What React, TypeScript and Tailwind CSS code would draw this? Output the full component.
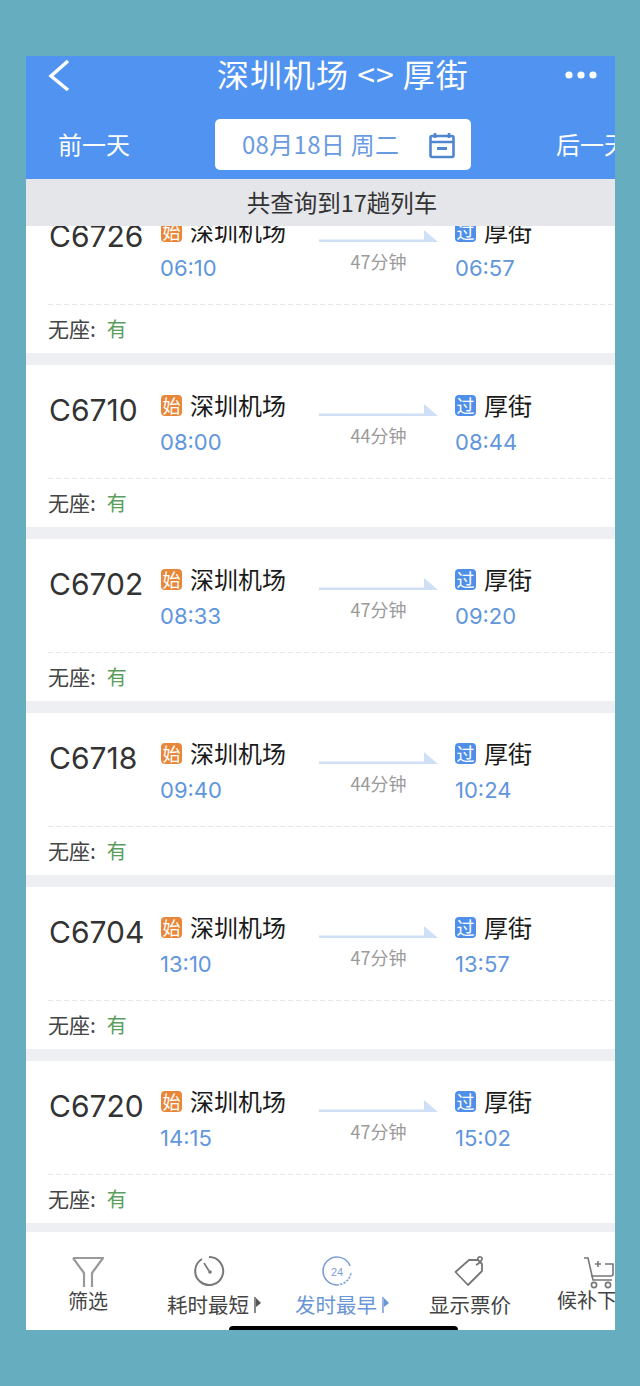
const trains = [
  { no: "C6726", dep: "06:10", arr: "06:57", dur: "47分钟" },
  { no: "C6710", dep: "08:00", arr: "08:44", dur: "44分钟" },
  { no: "C6702", dep: "08:33", arr: "09:20", dur: "47分钟" },
  { no: "C6718", dep: "09:40", arr: "10:24", dur: "44分钟" },
  { no: "C6704", dep: "13:10", arr: "13:57", dur: "47分钟" },
  { no: "C6720", dep: "14:15", arr: "15:02", dur: "47分钟" },
];

function SortMark({ color }: { color: string }) {
  return (
    <svg width="7" height="18" viewBox="0 0 7 18" className="ml-[5px] shrink-0">
      <path d="M1 2v16" stroke={color} strokeWidth="1.4" />
      <path d="M2 3l5 5-5 4z" fill={color} />
    </svg>
  );
}

function TrainCard({ no, dep, arr, dur }: (typeof trains)[number]) {
  return (
    <div className="h-[162px] shrink-0 bg-white">
      <div className="flex h-[113px] pl-[23px]">
        <div className="w-[112px] pt-[27px] text-[30px] leading-[36px] text-[#333333] font-['Inter']">{no}</div>
        <div className="w-[158px] pt-[27px]">
          <div className="flex items-center h-[26px]">
            <span className="flex h-[21px] w-[21px] items-center justify-center rounded-[4px] bg-[#e8873a] text-[18px] leading-none text-white">始</span>
            <span className="ml-[8px] text-[24px] leading-[26px] text-[#1a1a1a]">深圳机场</span>
          </div>
          <div className="-ml-[1px] mt-[10px] text-[22px] leading-[28px] text-[#5f96dc] font-['Inter']">{dep}</div>
        </div>
        <div className="w-[119px] shrink-0 pt-[39px]">
          <svg width="119" height="13" viewBox="0 0 119 13" className="block">
            <path d="M0 9.5h105V0l14 12H0z" fill="#cfe0f6" />
          </svg>
          <div className="mt-[6px] text-center text-[18px] leading-[24px] text-[#9a9a9a]">{dur}</div>
        </div>
        <div className="ml-[18px] pt-[27px]">
          <div className="-ml-[1px] flex items-center h-[26px]">
            <span className="flex h-[21px] w-[21px] items-center justify-center rounded-[4px] bg-[#4f8fea] text-[18px] leading-none text-white">过</span>
            <span className="ml-[8px] text-[24px] leading-[26px] text-[#1a1a1a]">厚街</span>
          </div>
          <div className="-ml-[1px] mt-[10px] text-[22px] leading-[28px] text-[#5f96dc] font-['Inter']">{arr}</div>
        </div>
      </div>
      <div className="ml-[22px] h-[1px] bg-[repeating-linear-gradient(90deg,#e6e6e8_0_5px,transparent_5px_8px)]" />
      <div className="flex h-[48px] items-center pl-[22px] text-[21px] text-[#444444]">
        <span>无座:</span>
        <span className="ml-[11px] text-[20px] text-[#5a9e5e]">有</span>
      </div>
    </div>
  );
}

export default function App() {
  return (
    <div className="h-[1386px] w-[640px] overflow-hidden bg-[#66aebf] pl-[26px] pt-[56px] font-['Noto_Sans_CJK_SC',sans-serif]">
      <div className="relative flex h-[1274px] w-[589px] flex-col overflow-hidden bg-[#eeeff2]">
        {/* header */}
        <div className="h-[123px] shrink-0 bg-[#5093f0] text-white">
          <div className="flex h-[38px] items-center pl-[22px] pr-[17px]">
            <svg width="22" height="32" viewBox="0 0 22 32" fill="none" stroke="white" strokeWidth="3.4">
              <path d="M20 2L3 17l17 14" />
            </svg>
            <span className="-mt-[4px] ml-[147px] text-[32px] leading-[38px] tracking-[1px]">深圳机场 &lt;&gt; 厚街</span>
            <svg width="34" height="10" viewBox="0 0 34 10" fill="white" className="ml-auto">
              <circle cx="5" cy="5" r="3.6" />
              <circle cx="17" cy="5" r="3.6" />
              <circle cx="29" cy="5" r="3.6" />
            </svg>
          </div>
          <div className="mt-[25px] flex h-[51px] items-center">
            <span className="ml-[32px] w-[157px] -mt-[1px] shrink-0 text-[24px]">前一天</span>
            <div className="flex h-[51px] w-[256px] shrink-0 items-center rounded-[5px] bg-white pl-[27px] text-[24px] tracking-[0.3px] text-[#6a9be0]">
              <span className="-mt-[2px]">08月18日 周二</span>
              <svg width="28" height="28" viewBox="0 0 28 28" fill="none" stroke="#4f86cf" strokeWidth="2.6" className="ml-auto mr-[15px]">
                <rect x="2.5" y="5" width="23" height="21" rx="1.5" />
                <path d="M3 11h22M7 2v5M21 2v5" />
                <path d="M9 17.5h10" strokeWidth="3" />
              </svg>
            </div>
            <span className="ml-[85px] -mt-[1px] shrink-0 whitespace-nowrap text-[24px]">后一天</span>
          </div>
        </div>

        <div className="z-10 flex h-[47px] shrink-0 items-center justify-center bg-[#e5e6ea] pl-[43px] text-[23.5px] text-[#333333]">
          共查询到17趟列车
        </div>

        {/* list */}
        <div className="flex h-[1006px] flex-col overflow-hidden">
          <div className="-mt-[35px] flex flex-col gap-[12px]">
            {trains.map((t) => (
              <TrainCard key={t.no} {...t} />
            ))}
          </div>
        </div>

        {/* bottom tabs */}
        <div className="flex h-[98px] shrink-0 bg-white">
          <div className="flex w-[124px] shrink-0 flex-col items-center pt-[24px]">
            <svg width="34" height="32" viewBox="0 0 34 32" fill="none" stroke="#999999" strokeWidth="2.2">
              <path d="M2 2h30l-11 15v14M2 2l11 15v14" strokeLinejoin="round" />
            </svg>
            <span className="-mt-[1px] text-[20px] leading-[28px] text-[#444444]">筛选</span>
          </div>
          <div className="flex w-[128px] shrink-0 flex-col items-center pt-[23px]">
            <svg width="32" height="32" viewBox="0 0 32 32" fill="none" stroke="#777777" strokeWidth="2" className="mr-[11px]">
              <path d="M9 4a14 14 0 1 0 7-2" />
              <path d="M11 8l5 8" strokeWidth="1.6" />
              <circle cx="17" cy="17" r="1.8" fill="#777777" stroke="none" />
            </svg>
            <div className="mt-[3px] flex items-center text-[20.5px] leading-[28px] text-[#444444]">耗时最短<SortMark color="#555555" /></div>
          </div>
          <div className="flex w-[128px] shrink-0 flex-col items-center pt-[23px]">
            <svg width="32" height="32" viewBox="0 0 32 32" fill="none" stroke="#7d9fd6" strokeWidth="1.6" className="mr-[10px]">
              <path d="M30 17A14 14 0 1 1 16 2a14 14 0 0 1 13 9" />
              <path d="M30 17a14 14 0 0 1-14 13" strokeDasharray="1.5 2" stroke="#ffffff" />
              <text x="16" y="20.5" textAnchor="middle" fontSize="11" fill="#7d9fd6" stroke="none" fontFamily="Liberation Sans">24</text>
            </svg>
            <div className="mt-[3px] flex items-center text-[20.5px] leading-[28px] text-[#6a95d6]">发时最早<SortMark color="#6a95d6" /></div>
          </div>
          <div className="flex w-[128px] shrink-0 flex-col items-center pt-[23px]">
            <svg width="32" height="32" viewBox="0 0 32 32" fill="none" stroke="#777777" strokeWidth="1.8" strokeLinejoin="round" className="mr-[1px]">
              <path d="M1.5 17L15 5h9l4 4v7L14 30z" />
              <path d="M22 10c2-1 5-3 6-6 .5-2-3-3-4-1-.6 1 0 2 0 3" />
            </svg>
            <span className="mt-[3px] text-[20.5px] leading-[28px] text-[#444444]">显示票价</span>
          </div>
          <div className="flex w-[81px] shrink-0 flex-col overflow-hidden pt-[25px] pl-[23px]">
            <svg width="32" height="32" viewBox="0 0 32 32" fill="none" stroke="#777777" strokeWidth="1.6" className="ml-[26px] shrink-0">
              <path d="M1 1h4l5 22h19M8 19h20a2 2 0 0 0 2-2V7H22" />
              <path d="M12 7h6M15 4v6" />
              <circle cx="11" cy="28" r="2.6" />
              <circle cx="25" cy="28" r="2.6" />
            </svg>
            <span className="-mt-[3px] whitespace-nowrap text-[20px] leading-[28px] text-[#444444]">候补下单</span>
          </div>
        </div>

        {/* home indicator */}
        <div className="absolute bottom-0 left-[203px] h-[4px] w-[229px] rounded-t-[5px] bg-black" />
      </div>
    </div>
  );
}
